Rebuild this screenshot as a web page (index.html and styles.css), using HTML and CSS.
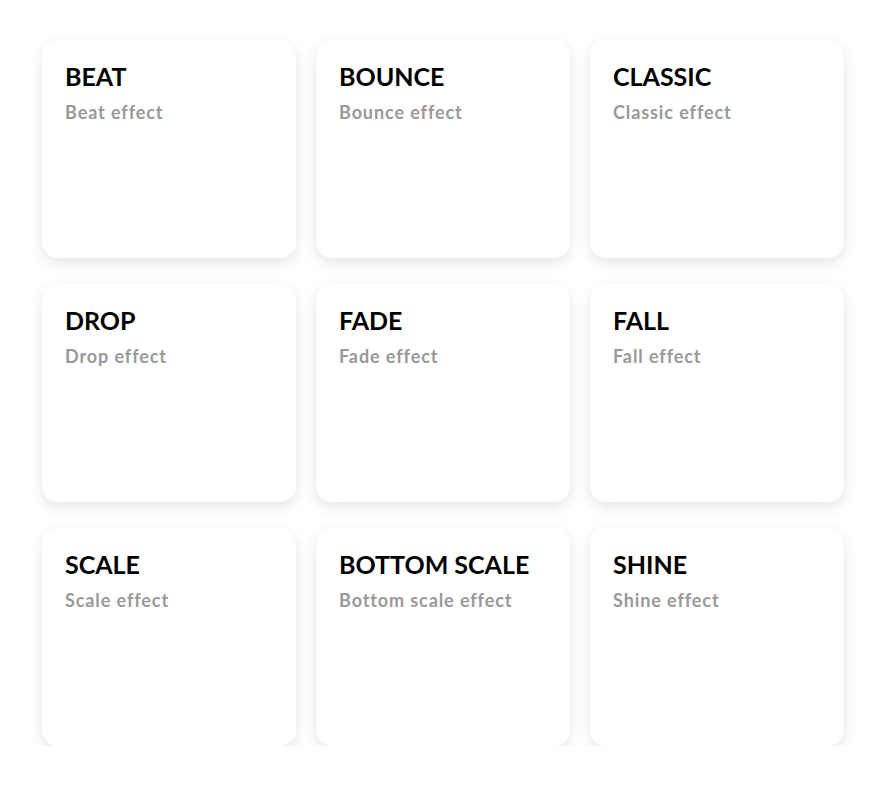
FILE: index.html
```html
<!DOCTYPE html>
<html>
<head>
<meta charset="utf-8">
<link rel="stylesheet" href="styles.css">
</head>
<body>
<div class="grid">
  <div class="card"><div class="title">BEAT</div><div class="sub">Beat effect</div></div>
  <div class="card"><div class="title">BOUNCE</div><div class="sub">Bounce effect</div></div>
  <div class="card"><div class="title">CLASSIC</div><div class="sub">Classic effect</div></div>
  <div class="card"><div class="title">DROP</div><div class="sub">Drop effect</div></div>
  <div class="card"><div class="title">FADE</div><div class="sub">Fade effect</div></div>
  <div class="card"><div class="title">FALL</div><div class="sub">Fall effect</div></div>
  <div class="card"><div class="title">SCALE</div><div class="sub">Scale effect</div></div>
  <div class="card"><div class="title">BOTTOM SCALE</div><div class="sub">Bottom scale effect</div></div>
  <div class="card"><div class="title">SHINE</div><div class="sub">Shine effect</div></div>
</div>
</body>
</html>
```
FILE: styles.css
```css
html, body {
  margin: 0;
  padding: 0;
  background: #ffffff;
}
body {
  font-family: "Lato", "Noto Sans", sans-serif;
}
.grid {
  display: grid;
  grid-template-columns: repeat(3, 254px);
  grid-auto-rows: 218px;
  column-gap: 20px;
  row-gap: 26px;
  padding: 40px 0 0 42px;
}
.card {
  background: #fff;
  border-radius: 16px;
  box-shadow: 0 5px 14px rgba(0, 0, 0, 0.1);
  padding: 21px 23px;
}
.title {
  font-size: 25px;
  font-weight: 700;
  color: #000;
  line-height: 30px;
}
.sub {
  margin-top: 10px;
  font-size: 18px;
  font-weight: 700;
  color: #999;
  line-height: 22px;
  letter-spacing: 0.9px;
}
```
